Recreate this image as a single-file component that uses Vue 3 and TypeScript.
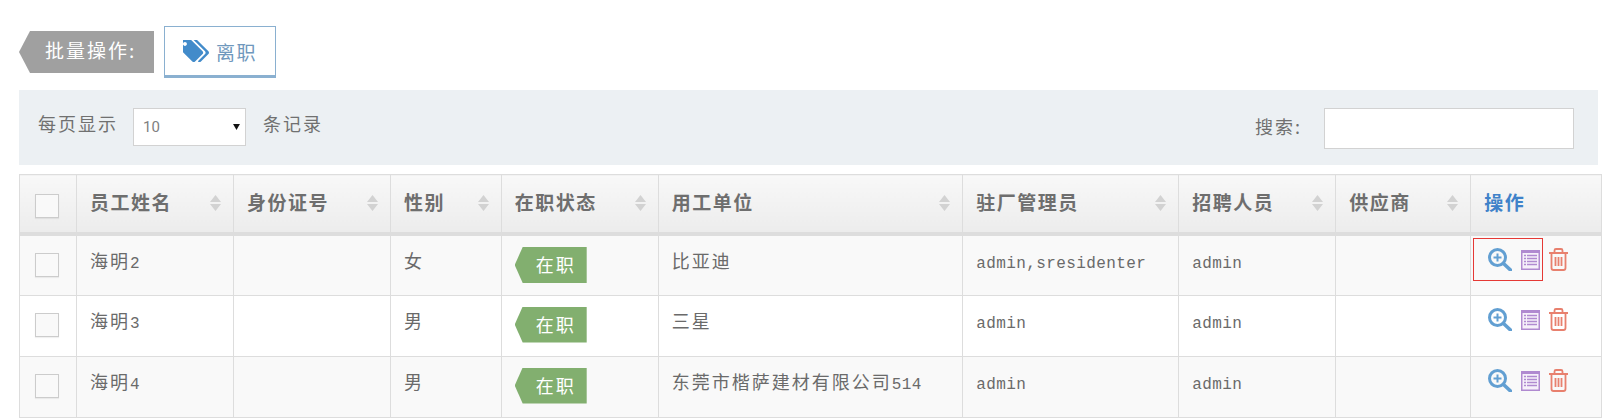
<script setup lang="ts">
interface Row { name: string; num: string; sex: string; unit: string; unitNum: string; admin: string }
const heads = [
  { t: '员工姓名', s: true }, { t: '身份证号', s: true }, { t: '性别', s: true }, { t: '在职状态', s: true },
  { t: '用工单位', s: true }, { t: '驻厂管理员', s: true }, { t: '招聘人员', s: true }, { t: '供应商', s: true },
]
const widths = [57, 157, 157, 110.7, 157, 304.5, 216, 157, 135, 131]
const rows: Row[] = [
  { name: '海明', num: '2', sex: '女', unit: '比亚迪', unitNum: '', admin: 'admin,sresidenter' },
  { name: '海明', num: '3', sex: '男', unit: '三星', unitNum: '', admin: 'admin' },
  { name: '海明', num: '4', sex: '男', unit: '东莞市楷萨建材有限公司', unitNum: '514', admin: 'admin' },
]
</script>

<template>
  <div class="page">
    <div class="actions">
      <div class="tag">批量操作:</div>
      <button class="btn" type="button">
        <svg class="tags" viewBox="128 192 1707 1440" width="26" height="22">
          <path fill="#428bca" d="M384 448q0-53-37.500-90.500t-90.500-37.500-90.500 37.500-37.500 90.500 37.500 90.500 90.500 37.500 90.500-37.500 37.500-90.500zm1067 576q0 53-37 90l-491 492q-39 37-91 37-53 0-90-37l-715-716q-38-37-64.500-101t-26.500-117v-416q0-52 38-90t90-38h416q53 0 117 26.500t102 64.500l715 714q37 39 37 91zm384 0q0 53-37 90l-491 492q-39 37-91 37-36 0-59-14t-53-45l470-470q37-37 37-90 0-52-37-91l-715-714q-38-38-102-64.500t-117-26.500h224q53 0 117 26.500t102 64.500l715 714q37 39 37 91z" />
        </svg>
        <span>离职</span>
      </button>
    </div>

    <div class="toolbar">
      <div class="length">
        <span>每页显示</span>
        <div class="select-wrap">
          <select class="select"><option>10</option></select>
          <svg class="caret" viewBox="0 0 8 7" width="7" height="6"><path d="M0 0h8L4 7z" fill="#111" /></svg>
        </div>
        <span class="after">条记录</span>
      </div>
      <div class="search">
        <span>搜索:</span>
        <input class="input" type="text" />
      </div>
    </div>

    <table class="grid">
      <colgroup>
        <col v-for="(w, i) in widths" :key="i" :style="{ width: w + 'px' }" />
      </colgroup>
      <thead>
        <tr>
          <th class="check-cell"><span class="check"></span></th>
          <th v-for="h in heads" :key="h.t">
            <div class="th-in">
              <span class="th-text">{{ h.t }}</span>
              <svg viewBox="0 0 11 16" width="11" height="16"><path d="M5.500 0 11 7H0zM0 9h11l-5.500 7z" fill="#d2d2d2" /></svg>
            </div>
          </th>
          <th class="op-head"><span class="th-text">操作</span></th>
        </tr>
      </thead>
      <tbody>
        <tr v-for="(r, i) in rows" :key="r.num">
          <td class="check-cell"><span class="check"></span></td>
          <td>{{ r.name }}<span class="latin">{{ r.num }}</span></td>
          <td></td>
          <td>{{ r.sex }}</td>
          <td class="badge-cell"><span class="badge">在职</span></td>
          <td>{{ r.unit }}<span v-if="r.unitNum" class="latin">{{ r.unitNum }}</span></td>
          <td><span class="latin">{{ r.admin }}</span></td>
          <td><span class="latin">admin</span></td>
          <td></td>
          <td class="op-cell">
            <div v-if="i === 0" class="mark"></div>
            <div class="ops">
              <svg class="ic-zoom" viewBox="0 0 24 23" width="24" height="23">
                <circle cx="9.500" cy="9.500" r="8" fill="none" stroke="#629fd2" stroke-width="3" />
                <path d="M15.500 15.500 22.500 22" fill="none" stroke="#629fd2" stroke-width="3.600" stroke-linecap="round" />
                <path d="M5.500 9.500h8M9.500 5.500v8" fill="none" stroke="#629fd2" stroke-width="2" />
              </svg>
              <svg class="ic-list" viewBox="0 0 19 20" width="19" height="20">
                <rect x="0" y="0" width="19" height="20" fill="#b08ad0" />
                <rect x="1.500" y="3" width="16" height="15.500" fill="#f6f0fa" />
                <path d="M3 5.500h2M6 5.500h10M3 8.500h2M6 8.500h10M3 11.500h2M6 11.500h10M3 14.500h2M6 14.500h10" stroke="#b08ad0" stroke-width="1.400" fill="none" />
              </svg>
              <svg viewBox="0 0 19 23" width="19" height="23">
                <path d="M0 5h19" stroke="#e8806e" stroke-width="2" fill="none" />
                <path d="M5.500 5V2.500a1.500 1.500 0 0 1 1.500-1.500h5a1.500 1.500 0 0 1 1.500 1.500V5" stroke="#e8806e" stroke-width="1.800" fill="none" />
                <path d="M2.500 5v15a2 2 0 0 0 2 2h10a2 2 0 0 0 2-2V5" stroke="#e8806e" stroke-width="1.800" fill="none" />
                <path d="M6.500 9v9M9.500 9v9M12.500 9v9" stroke="#e8806e" stroke-width="1.800" fill="none" />
              </svg>
            </div>
          </td>
        </tr>
      </tbody>
    </table>
  </div>
</template>

<style>
html, body { background: #fff; }
</style>

<style scoped>
.page {
  padding: 26px 17px 0 19px;
  font-family: "Noto Sans CJK SC", "Liberation Sans", sans-serif;
  font-size: 18px;
  color: #707070;
  letter-spacing: 2px;
}
.actions { display: flex; align-items: center; gap: 10px; height: 52px; margin-bottom: 12px; }
.tag {
  width: 135px;
  height: 42px;
  background: #a0a0a0;
  color: #fff;
  padding-left: 26px;
  box-sizing: border-box;
  line-height: 38px;
  font-size: 19px;
  letter-spacing: 2px;
  white-space: nowrap;
  clip-path: polygon(0 50%, 11px 0, 100% 0, 100% 100%, 11px 100%);
}
.btn {
  width: 112px;
  height: 52px;
  box-sizing: border-box;
  background: #fff;
  border: 1px solid #8ab0d0;
  border-bottom-width: 3px;
  display: flex;
  align-items: center;
  padding: 0 0 0 18px;
  gap: 7px;
  font: inherit;
  font-size: 19px;
  letter-spacing: 1.500px;
  color: #6f98bd;
}
.tags { flex: none; }
.toolbar {
  height: 75px;
  background: #ecf0f3;
  display: flex;
  align-items: center;
  justify-content: space-between;
  padding: 0 24px 0 19px;
  margin-bottom: 9px;
  box-sizing: border-box;
}
.length { display: flex; align-items: center; gap: 15px; position: relative; top: -1px; }
.length > span { position: relative; top: -4px; }
.length > .after { margin-left: 2px; }
.search > span { position: relative; top: -3px; }
.select-wrap { position: relative; width: 113px; height: 38px; }
.select {
  appearance: none;
  width: 100%;
  height: 100%;
  box-sizing: border-box;
  background: #fff;
  border: 1px solid #d2d2d2;
  border-radius: 0;
  padding: 0 9px;
  font-family: "Roboto", "Liberation Sans", sans-serif;
  font-size: 15px;
  color: #808080;
}
.caret { position: absolute; right: 6px; top: 16px; }
.search { display: flex; align-items: center; gap: 22px; position: relative; top: 1px; }
.input {
  width: 250px;
  height: 41px;
  box-sizing: border-box;
  border: 1px solid #d2d2d2;
  background: #fff;
}
.grid {
  width: 1582px;
  margin-right: -3px;
  border-collapse: collapse;
  table-layout: fixed;
}
.grid th, .grid td { border: 1px solid #ddd; padding: 0 0 0 13px; }
.grid th {
  height: 57px;
  background: linear-gradient(#f8f8f8, #ececec);
  border-bottom: 4px solid #ddd;
  text-align: left;
  font-size: 19px;
  letter-spacing: 1.500px;
  font-weight: 700;
  color: #6e6e6e;
}
.th-in { display: flex; align-items: center; justify-content: space-between; padding-right: 12px; }
.th-in svg { position: relative; top: -1px; }
.th-text { position: relative; top: -2px; }
.op-head { color: #3f82c9 !important; }
.grid td {
  height: 61px;
  vertical-align: top;
  padding-top: 11px;
  box-sizing: border-box;
  color: #6a6a6a;
  font-weight: 400;
  white-space: nowrap;
}
.grid tbody tr:nth-child(odd) td { background: #f9f9f9; }
.grid tbody tr:nth-child(even) td { background: #fff; }
.latin { font-family: "Liberation Mono", monospace; font-size: 16px; letter-spacing: 0.4px; }
.grid th.check-cell { padding: 0 2px 0 0; text-align: center; vertical-align: middle; }
.grid td.check-cell { padding: 17px 2px 0 0; text-align: center; }
.check {
  display: inline-block;
  width: 24px;
  height: 24px;
  box-sizing: border-box;
  border: 1px solid #ccc;
  background: #f9f9f9;
  box-shadow: 0 1px 1px rgba(0, 0, 0, 0.06);
  vertical-align: middle;
}
.grid td.check-cell .check { vertical-align: top; }
.grid .badge-cell { padding-top: 11px; }
.badge {
  display: block;
  width: 72px;
  height: 36px;
  box-sizing: border-box;
  padding-left: 21px;
  line-height: 34px;
  background: #82af6f;
  color: #fff;
  clip-path: polygon(0 50%, 8px 0, 100% 0, 100% 100%, 8px 100%);
}
.grid .op-cell { position: relative; padding: 12px 0 0 17px; }
.ops { display: flex; align-items: flex-start; gap: 9px; }
.ops svg { flex: none; }
.ic-list { margin-top: 2px; }
.mark {
  position: absolute;
  left: 2px;
  top: 2px;
  width: 70px;
  height: 43px;
  box-sizing: border-box;
  border: 1px solid #e53935;
}
</style>
